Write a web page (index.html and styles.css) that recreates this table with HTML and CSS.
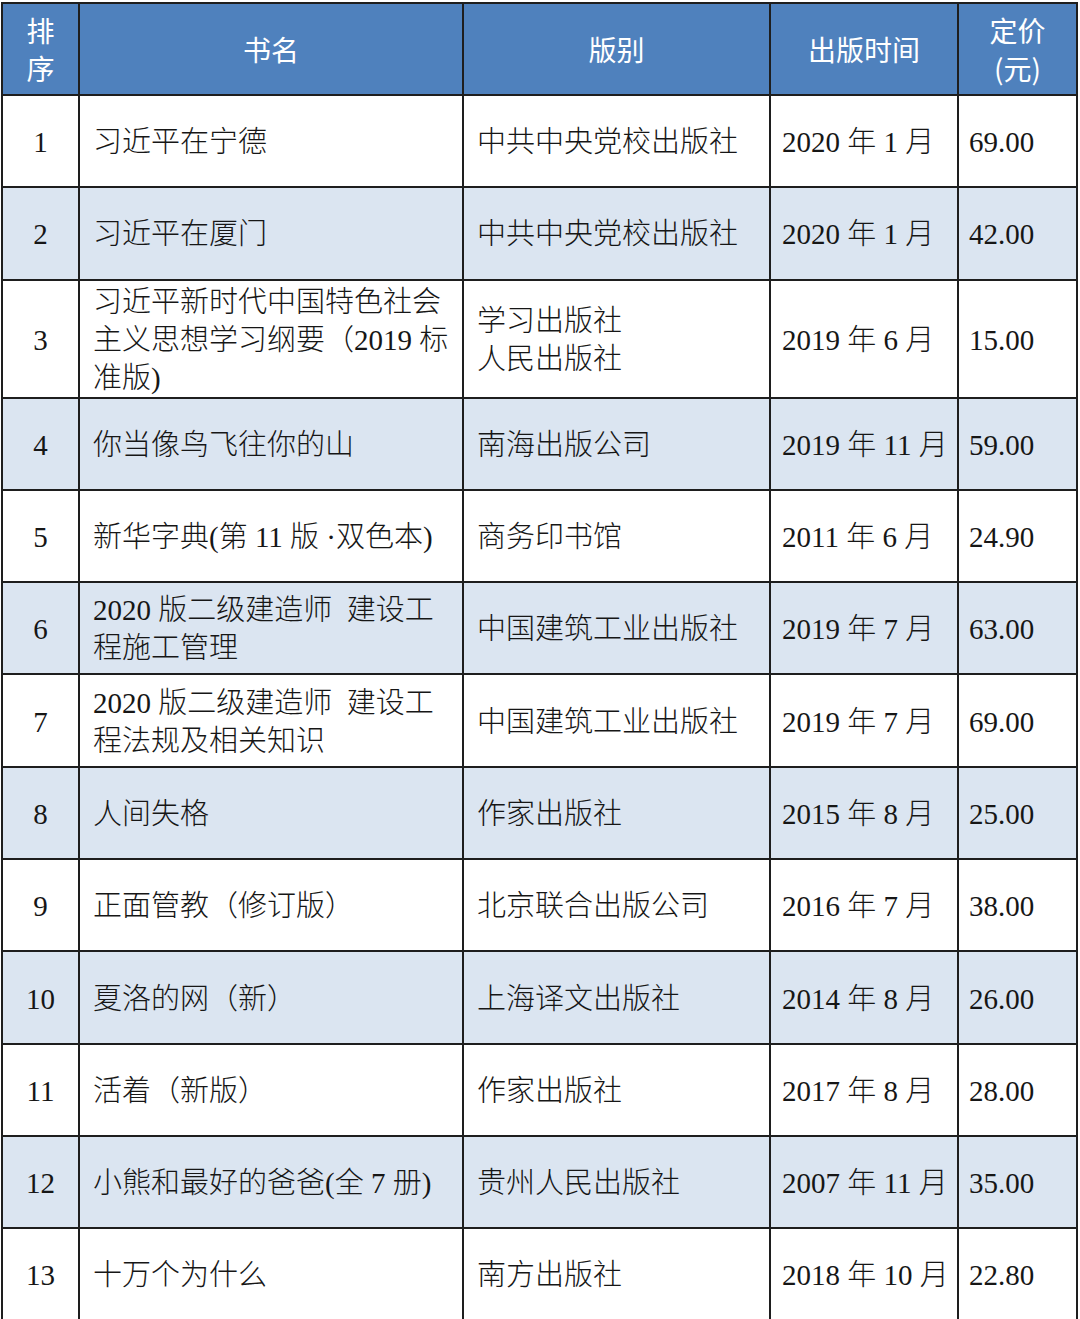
FILE: index.html
```html
<!DOCTYPE html>
<html lang="zh-CN">
<head>
<meta charset="utf-8">
<title>书目</title>
<link rel="stylesheet" href="styles.css">
</head>
<body>
<table class="books">
  <colgroup>
    <col class="c-rank">
    <col class="c-title">
    <col class="c-pub">
    <col class="c-date">
    <col class="c-price">
  </colgroup>
  <thead>
    <tr class="head">
      <th>排<br>序</th>
      <th>书名</th>
      <th>版别</th>
      <th>出版时间</th>
      <th>定价<br>(元)</th>
    </tr>
  </thead>
  <tbody>
    <tr>
      <td class="num">1</td><td class="txt">习近平在宁德</td><td class="txt">中共中央党校出版社</td><td class="date">2020 年 1 月</td><td class="price">69.00</td>
    </tr>
    <tr class="alt">
      <td class="num">2</td><td class="txt">习近平在厦门</td><td class="txt">中共中央党校出版社</td><td class="date">2020 年 1 月</td><td class="price">42.00</td>
    </tr>
    <tr class="tall">
      <td class="num">3</td><td class="txt">习近平新时代中国特色社会<br>主义思想学习纲要（2019 标<br>准版)</td><td class="txt">学习出版社<br>人民出版社</td><td class="date">2019 年 6 月</td><td class="price">15.00</td>
    </tr>
    <tr class="alt">
      <td class="num">4</td><td class="txt">你当像鸟飞往你的山</td><td class="txt">南海出版公司</td><td class="date">2019 年 11 月</td><td class="price">59.00</td>
    </tr>
    <tr>
      <td class="num">5</td><td class="txt">新华字典(第 11 版 ·双色本)</td><td class="txt">商务印书馆</td><td class="date">2011 年 6 月</td><td class="price">24.90</td>
    </tr>
    <tr class="alt">
      <td class="num">6</td><td class="txt">2020 版二级建造师&nbsp; 建设工<br>程施工管理</td><td class="txt">中国建筑工业出版社</td><td class="date">2019 年 7 月</td><td class="price">63.00</td>
    </tr>
    <tr>
      <td class="num">7</td><td class="txt">2020 版二级建造师&nbsp; 建设工<br>程法规及相关知识</td><td class="txt">中国建筑工业出版社</td><td class="date">2019 年 7 月</td><td class="price">69.00</td>
    </tr>
    <tr class="alt">
      <td class="num">8</td><td class="txt">人间失格</td><td class="txt">作家出版社</td><td class="date">2015 年 8 月</td><td class="price">25.00</td>
    </tr>
    <tr>
      <td class="num">9</td><td class="txt">正面管教（修订版）</td><td class="txt">北京联合出版公司</td><td class="date">2016 年 7 月</td><td class="price">38.00</td>
    </tr>
    <tr class="alt">
      <td class="num">10</td><td class="txt">夏洛的网（新）</td><td class="txt">上海译文出版社</td><td class="date">2014 年 8 月</td><td class="price">26.00</td>
    </tr>
    <tr>
      <td class="num">11</td><td class="txt">活着（新版）</td><td class="txt">作家出版社</td><td class="date">2017 年 8 月</td><td class="price">28.00</td>
    </tr>
    <tr class="alt">
      <td class="num">12</td><td class="txt">小熊和最好的爸爸(全 7 册)</td><td class="txt">贵州人民出版社</td><td class="date">2007 年 11 月</td><td class="price">35.00</td>
    </tr>
    <tr>
      <td class="num">13</td><td class="txt">十万个为什么</td><td class="txt">南方出版社</td><td class="date">2018 年 10 月</td><td class="price">22.80</td>
    </tr>
  </tbody>
</table>
</body>
</html>
```

FILE: styles.css
```css
html, body {
  margin: 0;
  padding: 0;
  background: #ffffff;
}

.books {
  margin: 2px 0 0 1px;
  width: 1077px;
  table-layout: fixed;
  border-collapse: collapse;
  font-family: "Liberation Serif", "Noto Sans CJK SC", serif;
  font-size: 29px;
  font-weight: 300;
  color: #161616;
}

.c-rank { width: 77px; }
.c-title { width: 384px; }
.c-pub { width: 307px; }
.c-date { width: 188px; }
.c-price { width: 119px; }

.books th,
.books td {
  border: 2px solid #1e1e1e;
  vertical-align: middle;
  white-space: nowrap;
  overflow: visible;
}

.books td {
  height: 92.3px;
  line-height: 38px;
  padding: 2px 0 0 0;
  box-sizing: border-box;
}

.head th {
  height: 90px;
  padding: 0;
  background: #4f81bd;
  color: #ffffff;
  font-family: "Noto Sans CJK SC", "Liberation Sans", sans-serif;
  font-size: 28px;
  font-weight: 400;
  line-height: 38px;
  text-align: center;
}

.alt td {
  background: #dbe5f1;
}

.tall td {
  height: 116px;
}

.num {
  text-align: center;
}

.txt {
  text-align: left;
  padding-left: 13px !important;
}

.date {
  text-align: left;
  padding-left: 11px !important;
}

.price {
  text-align: left;
  padding-left: 10px !important;
}
```
